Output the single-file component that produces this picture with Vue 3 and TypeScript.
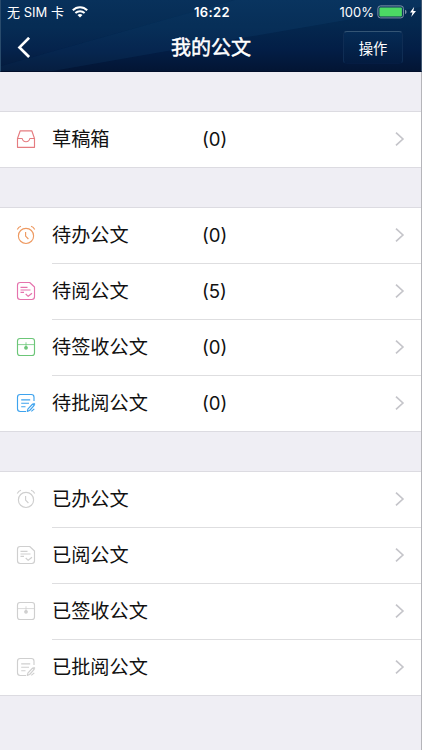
<script setup lang="ts">
type IconName = 'inbox' | 'clock' | 'read' | 'sign' | 'edit'

interface Row {
  icon: IconName
  label: string
  tone: string
  count?: number
}

const groups: Row[][] = [
  [{ icon: 'inbox', label: '草稿箱', tone: 'red', count: 0 }],
  [
    { icon: 'clock', label: '待办公文', tone: 'orange', count: 0 },
    { icon: 'read', label: '待阅公文', tone: 'pink', count: 5 },
    { icon: 'sign', label: '待签收公文', tone: 'green', count: 0 },
    { icon: 'edit', label: '待批阅公文', tone: 'blue', count: 0 },
  ],
  [
    { icon: 'clock', label: '已办公文', tone: 'muted' },
    { icon: 'read', label: '已阅公文', tone: 'muted' },
    { icon: 'sign', label: '已签收公文', tone: 'muted' },
    { icon: 'edit', label: '已批阅公文', tone: 'muted' },
  ],
]
</script>

<template>
  <div class="screen">
    <header class="header">
      <svg class="sheen" viewBox="0 0 422 72" preserveAspectRatio="none" aria-hidden="true">
        <path d="M0 0H235L0 67Z" fill="#3d8ac4" fill-opacity=".05" />
        <path d="M0 67L235 0H422V7L52 72H0Z" fill="#2b76b0" fill-opacity=".1" />
      </svg>
      <div class="status">
        <div class="carrier">
          <span>无 SIM 卡</span>
          <svg class="wifi" width="16" height="12" viewBox="0 0 16 12" fill="none" stroke="#fff" stroke-width="2">
            <path d="M.8 4.2C4.8.1 11.2.1 15.2 4.2" />
            <path d="M3.4 7C6 4.5 10 4.5 12.6 7" />
            <path d="M8 11.6L5.5 9.1Q8 7 10.5 9.1Z" fill="#fff" stroke="none" />
          </svg>
        </div>
        <span class="time">16:22</span>
        <div class="power">
          <span>100%</span>
          <svg width="40" height="14" viewBox="0 0 40 14">
            <rect x=".9" y=".9" width="25.5" height="12" rx="2.6" fill="none" stroke="#7f93a9" />
            <rect x="2.4" y="2.4" width="22.5" height="9" rx="1" fill="#4cd964" />
            <path d="M28 4.8Q29.6 5.4 29.6 7T28 9.2Z" fill="#7f93a9" />
            <path d="M37.2 1.8L33 7.4H35.5L34.2 12L39 6H36.3Z" fill="#fff" />
          </svg>
        </div>
      </div>
      <nav class="nav">
        <button class="back" type="button" aria-label="返回">
          <svg width="14" height="22" viewBox="0 0 14 22" fill="none" stroke="#fff" stroke-width="2.7">
            <path d="M12.1 .8L2.5 10.4L12.1 20" />
          </svg>
        </button>
        <h1 class="title">我的公文</h1>
        <button class="action" type="button">操作</button>
      </nav>
    </header>

    <main class="list">
      <section v-for="(group, g) in groups" :key="g" class="group">
        <div v-for="row in group" :key="row.label" class="row">
          <svg class="icon" :class="row.tone" width="20" height="20" viewBox="0 0 20 20">
            <g v-if="row.icon === 'inbox'">
              <path d="M1.5 9.5L4.2 1.8H15.8L18.5 9.5V18.3H1.5ZM1.5 9.5H6.2C6.6 11.6 8 12.7 10 12.7S13.4 11.6 13.8 9.5H18.5" />
            </g>
            <g v-else-if="row.icon === 'clock'">
              <circle cx="10" cy="10.9" r="7.6" />
              <path d="M9.6 7V11.2L12.4 14M1.3 4.4Q2.5 2 5 1.2M18.7 4.4Q17.5 2 15 1.2" />
            </g>
            <g v-else-if="row.icon === 'read'">
              <path d="M4.2 1.5H13.7L18.5 6V15.8Q18.5 18.5 15.8 18.5H4.2Q1.5 18.5 1.5 15.8V4.2Q1.5 1.5 4.2 1.5Z" />
              <path d="M4.5 6.3H11.5M4.5 9H14.5M4.5 11.3H8M9.7 13L12.2 15.3L16 12.2" />
            </g>
            <g v-else-if="row.icon === 'sign'">
              <rect x="1.5" y="1.5" width="17" height="17" rx="2.5" />
              <path class="fine" d="M1.5 7.6H18.5M10 5.3V10" />
              <circle class="solid" cx="10" cy="10.8" r="1.3" />
            </g>
            <g v-else>
              <path d="M18 8V4.2Q18 1.5 15.3 1.5H4.2Q1.5 1.5 1.5 4.2V15.8Q1.5 18.5 4.2 18.5H10" />
              <path d="M5.2 6.8H14.2M5.2 10.2H13M5.2 13.7H9.5" />
              <path d="M11.2 18.4L12 15.9L16.7 11L18.2 12.4L13.6 17.5ZM17.6 10.2L19 11.5M15.3 18.4L18.3 15.9" />
            </g>
          </svg>
          <span class="label">{{ row.label }}</span>
          <span class="count"><template v-if="row.count !== undefined">({{ row.count }})</template></span>
          <svg class="chevron" width="10" height="16" viewBox="0 0 10 16">
            <path d="M1 1.6L7.9 8L1 14.4" />
          </svg>
        </div>
      </section>
    </main>
  </div>
</template>

<style>
body {
  margin: 0;
  background: #efeef4;
}
</style>

<style scoped>
.screen {
  box-sizing: border-box;
  display: flex;
  flex-direction: column;
  width: 422px;
  height: 750px;
  overflow: hidden;
  background: #efeef4;
  color: #111;
  font-family: Inter, "Noto Sans CJK SC", sans-serif;
}

.header {
  position: relative;
  flex: none;
  box-sizing: border-box;
  height: 72px;
  border-bottom: 1px solid #020f2b;
  border-left: 1px solid #294b6c;
  border-right: 1px solid #415873;
  background: linear-gradient(#062d56 0%, #04284f 35%, #031e46 70%, #031534 100%);
  color: #fff;
}

.sheen {
  position: absolute;
  inset: 0;
  width: 100%;
  height: 100%;
}

.status {
  position: relative;
  display: grid;
  grid-template-columns: 1fr auto 1fr;
  align-items: center;
  height: 24px;
  padding: 0 4px 0 6px;
  font-size: 13px;
  line-height: 24px;
}

.carrier,
.power {
  display: flex;
  align-items: center;
}

.carrier {
  gap: 8px;
  white-space: pre;
}

.power {
  justify-content: flex-end;
  gap: 3px;
}

.time {
  font-weight: 600;
  letter-spacing: 0.4px;
}

.nav {
  position: relative;
  display: grid;
  grid-template-columns: 64px 1fr 64px;
  align-items: center;
  height: 47px;
  padding: 0 18px 0 16px;
}

button {
  margin: 0;
  padding: 0;
  border: 0;
  background: none;
  color: inherit;
  font: inherit;
}

.back {
  display: flex;
}

.title {
  margin: 0;
  padding-left: 2px;
  font-size: 20px;
  font-weight: 400;
  line-height: 28px;
  text-align: center;
  -webkit-text-stroke: 0.5px currentColor;
}

.action {
  box-sizing: border-box;
  width: 60px;
  height: 33px;
  justify-self: end;
  padding-bottom: 1px;
  border: 1px solid #0f2d54;
  border-top-color: #345575;
  border-bottom-color: #051c42;
  border-radius: 4px;
  background: linear-gradient(#052b55, #031b40);
  font-size: 14.3px;
}

.list {
  display: flex;
  flex: 1;
  flex-direction: column;
  gap: 39px;
  padding-top: 39px;
  border-right: 1px solid #b5b5ba;
}

.group {
  border-top: 1px solid #dcdbe1;
  border-bottom: 1px solid #dcdbe1;
  background: #fff;
}

.row {
  position: relative;
  box-sizing: border-box;
  display: grid;
  grid-template-columns: 36px 150px 1fr 10px;
  align-items: center;
  height: 55px;
  padding: 0 16px 2px;
}

.row + .row {
  margin-top: 1px;
}

.row + .row::before {
  content: "";
  position: absolute;
  top: -1px;
  left: 52px;
  right: 0;
  height: 1px;
  background: #dedee0;
}

.icon {
  fill: none;
  stroke: currentColor;
  stroke-width: 1.15;
  stroke-linejoin: round;
}

.fine {
  stroke-width: 0.8;
}

.solid {
  fill: currentColor;
}

.red { color: #e57c80; }
.orange { color: #ee9a62; }
.pink { color: #e573ad; }
.green { color: #6cc678; }
.blue { color: #3ea3ee; }
.muted { color: #cfcfcf; }

.label {
  font-size: 19.2px;
  line-height: 28px;
  white-space: nowrap;
}

.count {
  padding-top: 1px;
  font-size: 18.6px;
  line-height: 27px;
}

.chevron {
  fill: none;
  stroke: #c5c5ca;
  stroke-width: 1.7;
}
</style>
